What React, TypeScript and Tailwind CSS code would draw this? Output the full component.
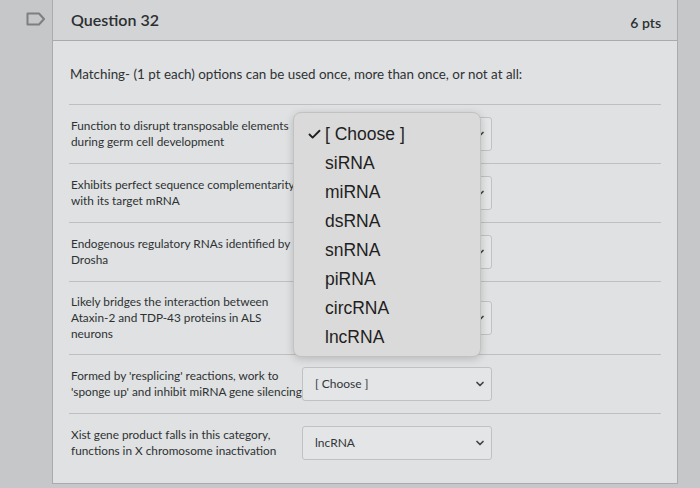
import { Check, ChevronDown } from "lucide-react";

const rows = [
  { label: ["Function to disrupt transposable elements", "during germ cell development"], value: "[ Choose ]" },
  { label: ["Exhibits perfect sequence complementarity", "with its target mRNA"], value: "[ Choose ]" },
  { label: ["Endogenous regulatory RNAs identified by", "Drosha"], value: "[ Choose ]" },
  { label: ["Likely bridges the interaction between", "Ataxin-2 and TDP-43 proteins in ALS", "neurons"], value: "[ Choose ]" },
  { label: ["Formed by 'resplicing' reactions, work to", "'sponge up' and inhibit miRNA gene silencing"], value: "[ Choose ]" },
  { label: ["Xist gene product falls in this category,", "functions in X chromosome inactivation"], value: "lncRNA" },
];

const options = ["siRNA", "miRNA", "dsRNA", "snRNA", "piRNA", "circRNA", "lncRNA"];

function SelectBox({ value }: { value: string }) {
  return (
    <div className="flex h-[34px] w-[190px] shrink-0 items-center justify-between rounded-[3px] border border-[#bfc1c2] bg-[#e3e5e6] pl-[12px] pr-[5px] text-[12px] text-[#33363a]">
      <span>{value}</span>
      <ChevronDown className="h-3 w-3 text-[#444]" strokeWidth={3.5} />
    </div>
  );
}

export default function App() {
  return (
    <div
      className="relative flex h-[488px] w-[700px] overflow-hidden bg-[#c5c7c8]"
      style={{ fontFamily: "Lato, 'Noto Sans', sans-serif" }}
    >
      <div className="w-[52px] shrink-0 pt-[12px] pl-[26px]">
        <svg width="20" height="14" viewBox="0 0 20 14" fill="none">
          <path d="M1.5 1.5 H13 L18 7 L13 12.5 H1.5 Z" stroke="#7d7f80" strokeWidth="2" strokeLinejoin="round" />
        </svg>
      </div>

      <div className="flex h-[484px] w-[626px] shrink-0 flex-col border-x border-b border-[#a9abac] bg-[#dfe1e2]">
        <div className="flex h-[41px] shrink-0 items-center justify-between border-b border-[#a8aaab] bg-[#d2d4d5] pl-[18px] pr-[16px]">
          <span className="text-[16px] font-semibold text-[#2c2f31]">Question 32</span>
          <span className="mt-[4px] text-[14px] font-semibold text-[#2c2f31]">6 pts</span>
        </div>

        <div className="px-[16px]">
          <p className="pt-[23px] pb-[20px] pl-[1px] text-[13.4px] text-[#2f3234]">
            Matching- (1 pt each) options can be used once, more than once, or not at all:
          </p>

          {rows.map((row, i) => (
            <div
              key={i}
              className="flex items-center gap-[3px] border-t border-[#bdbfc0] py-[12px] pl-[2px]"
            >
              <div className="w-[228px] shrink-0 text-[11.8px] leading-[16px] text-[#2e3133]">
                {row.label.map((l, j) => (
                  <div key={j} className="whitespace-nowrap">{l}</div>
                ))}
              </div>
              <SelectBox value={row.value} />
            </div>
          ))}
        </div>
      </div>

      <div className="absolute left-[293px] top-[112px] flex h-[245px] w-[188px] flex-col rounded-[8px] border border-[#c2c2c2] bg-[#dadada] pt-[7px] shadow-[0_2px_8px_rgba(0,0,0,0.18)]" style={{ fontFamily: "'Liberation Sans', Arial, sans-serif" }}>
        <div className="flex h-[29px] items-center text-[17.5px] text-[#1f1f1f]">
          <Check className="ml-[13px] mr-[3px] h-[15px] w-[15px]" strokeWidth={3} />
          <span>[ Choose ]</span>
        </div>
        {options.map((o) => (
          <div key={o} className="flex h-[29px] items-center pl-[31px] text-[17.5px] text-[#1f1f1f]">
            {o}
          </div>
        ))}
      </div>
    </div>
  );
}
